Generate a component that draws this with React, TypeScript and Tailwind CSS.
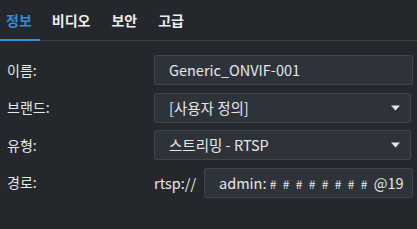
import React from 'react';

const tabs = ['정보', '비디오', '보안', '고급'];

function Caret() {
  return (
    <svg width="9" height="6" viewBox="0 0 9 6" className="shrink-0">
      <path d="M0 0.5 H9 L4.5 5.5 Z" fill="#e4e6e8" />
    </svg>
  );
}

function Row({ label, children }: { label: string; children: React.ReactNode }) {
  return (
    <div className="flex items-center h-[30px]">
      <div className="w-[154px] pl-[7px] text-[14px] text-[#e6e7e9]">{label}</div>
      {children}
    </div>
  );
}

export default function App() {
  return (
    <div
      className="w-[417px] h-[229px] bg-[#24272c] text-[#e6e7e9] overflow-hidden"
      style={{ fontFamily: '"Noto Sans CJK KR", "Noto Sans", sans-serif' }}
    >
      <div className="relative h-[41px] border-b border-[#3b3f45] flex items-center">
        {tabs.map((t, i) => (
          <div
            key={t}
            className={`relative h-full flex items-center text-[14px] font-bold ${
              i === 0 ? 'pl-[6px] pr-[8px] text-[#2f8fd6]' : 'ml-[12px] pr-[9px] text-[#eceef0]'
            }`}
          >
            {t}
            {i === 0 && <div className="absolute left-0 right-0 bottom-[-1px] h-[2px] bg-[#2f8fd6]" />}
          </div>
        ))}
      </div>

      <div className="flex flex-col gap-[7.5px] pt-[14px] pr-[4px]">
        <Row label="이름:">
          <div className="flex-1 h-full flex items-center px-[14px] bg-[#2e333a] border border-[#40454c] rounded-[2px] text-[14.5px]">
            Generic_ONVIF-001
          </div>
        </Row>
        <Row label="브랜드:">
          <div className="flex-1 h-full mr-[2px] flex items-center justify-between pl-[14px] pr-[10px] bg-[#2e333a] border border-[#40454c] rounded-[2px] text-[14.5px]">
            <span>[사용자 정의]</span>
            <Caret />
          </div>
        </Row>
        <Row label="유형:">
          <div className="flex-1 h-full mr-[2px] flex items-center justify-between pl-[14px] pr-[10px] bg-[#2e333a] border border-[#40454c] rounded-[2px] text-[14.5px]">
            <span>스트리밍 - RTSP</span>
            <Caret />
          </div>
        </Row>
        <Row label="경로:">
          <span className="w-[50px] text-[14.5px]">rtsp://</span>
          <div className="flex-1 min-w-0 h-full flex items-center pl-[14px] pr-[8px] bg-[#2e333a] border border-[#40454c] rounded-[2px] text-[14.5px]">
            <div className="overflow-hidden whitespace-nowrap">
              admin:{' '}
              {Array.from({ length: 8 }).map((_, i) => (
                <span key={i} className="inline-block w-[13px] text-[12px]">#</span>
              ))}
              @192.168.0.10:554
            </div>
          </div>
        </Row>
      </div>
    </div>
  );
}
